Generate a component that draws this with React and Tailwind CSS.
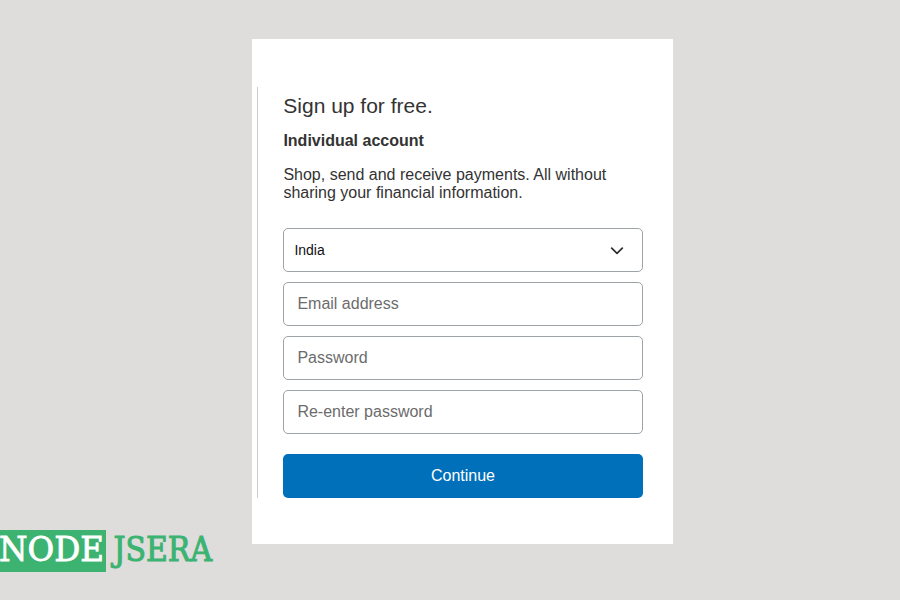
const fieldClass =
  "block h-[44px] w-full rounded-[5px] border border-[#9da3a6] bg-white px-[13.4px] text-[16px] text-[#2c2e2f] placeholder:text-[#6c6c6c] placeholder:opacity-100 outline-none";

function Logo() {
  return (
    <div className="flex h-[42px] items-stretch">
      <div className="w-[106px] bg-[#3cb371]">
        <svg width="106" height="42" className="block overflow-visible">
          <text x="-1" y="31.2" fontSize="33" textLength="105" lengthAdjust="spacingAndGlyphs" className="fill-white stroke-white stroke-[0.8] font-['DejaVu_Serif',serif]">NODE</text>
        </svg>
      </div>
      <svg width="112" height="42" className="block overflow-visible">
        <text x="7.5" y="31.2" fontSize="33" textLength="98.5" lengthAdjust="spacingAndGlyphs" className="fill-[#3cb371] stroke-[#3cb371] stroke-[1.1] font-['DejaVu_Serif',serif]">JSERA</text>
      </svg>
    </div>
  );
}

function SignUpCard() {
  return (
    <main className="mt-[39px] h-[505px] w-[421px] bg-white pl-[5px] pt-[48px]">
      <section className="h-[411px] w-[386px] border-l border-[#cccccc] pl-[25px] pt-[7px] text-[#333333]">
        <h1 className="pl-[0.3px] text-[21px] leading-[24px]">Sign up for free.</h1>
        <h2 className="mt-[14px] pl-[0.4px] text-[16px] font-bold leading-[18px]">Individual account</h2>
        <p className="mt-[16px] whitespace-nowrap pl-[0.4px] text-[16px] leading-[18px]">
          Shop, send and receive payments. All without
          <br />
          sharing your financial information.
        </p>
        <form className="mt-[26px] flex flex-col gap-[10px]">
          <button type="button" className="flex h-[44px] w-full items-center justify-between rounded-[5px] border border-[#9da3a6] pl-[10.4px] pr-[18px] text-[14px] text-[#111111]">
            <span>India</span>
            <svg width="14" height="8" viewBox="0 0 14 8" fill="none" className="mt-[1px] stroke-[#2c2e2f] stroke-[1.7]">
              <path d="M1.7 1.2 7 6.4 12.3 1.2" strokeLinecap="round" strokeLinejoin="round" />
            </svg>
          </button>
          <input className={fieldClass} placeholder="Email address" />
          <input className={fieldClass} placeholder="Password" />
          <input className={fieldClass} placeholder="Re-enter password" />
          <button type="button" className="mt-[10px] h-[44px] w-full rounded-[5px] bg-[#0070ba] pb-[1px] text-[16px] text-white">
            Continue
          </button>
        </form>
      </section>
    </main>
  );
}

export default function App() {
  return (
    <div className="flex h-[600px] w-[900px] items-start overflow-hidden bg-[#dedddc] font-['Liberation_Sans',Arial,sans-serif]">
      <div className="w-[252px] pt-[530px]">
        <Logo />
      </div>
      <SignUpCard />
    </div>
  );
}
